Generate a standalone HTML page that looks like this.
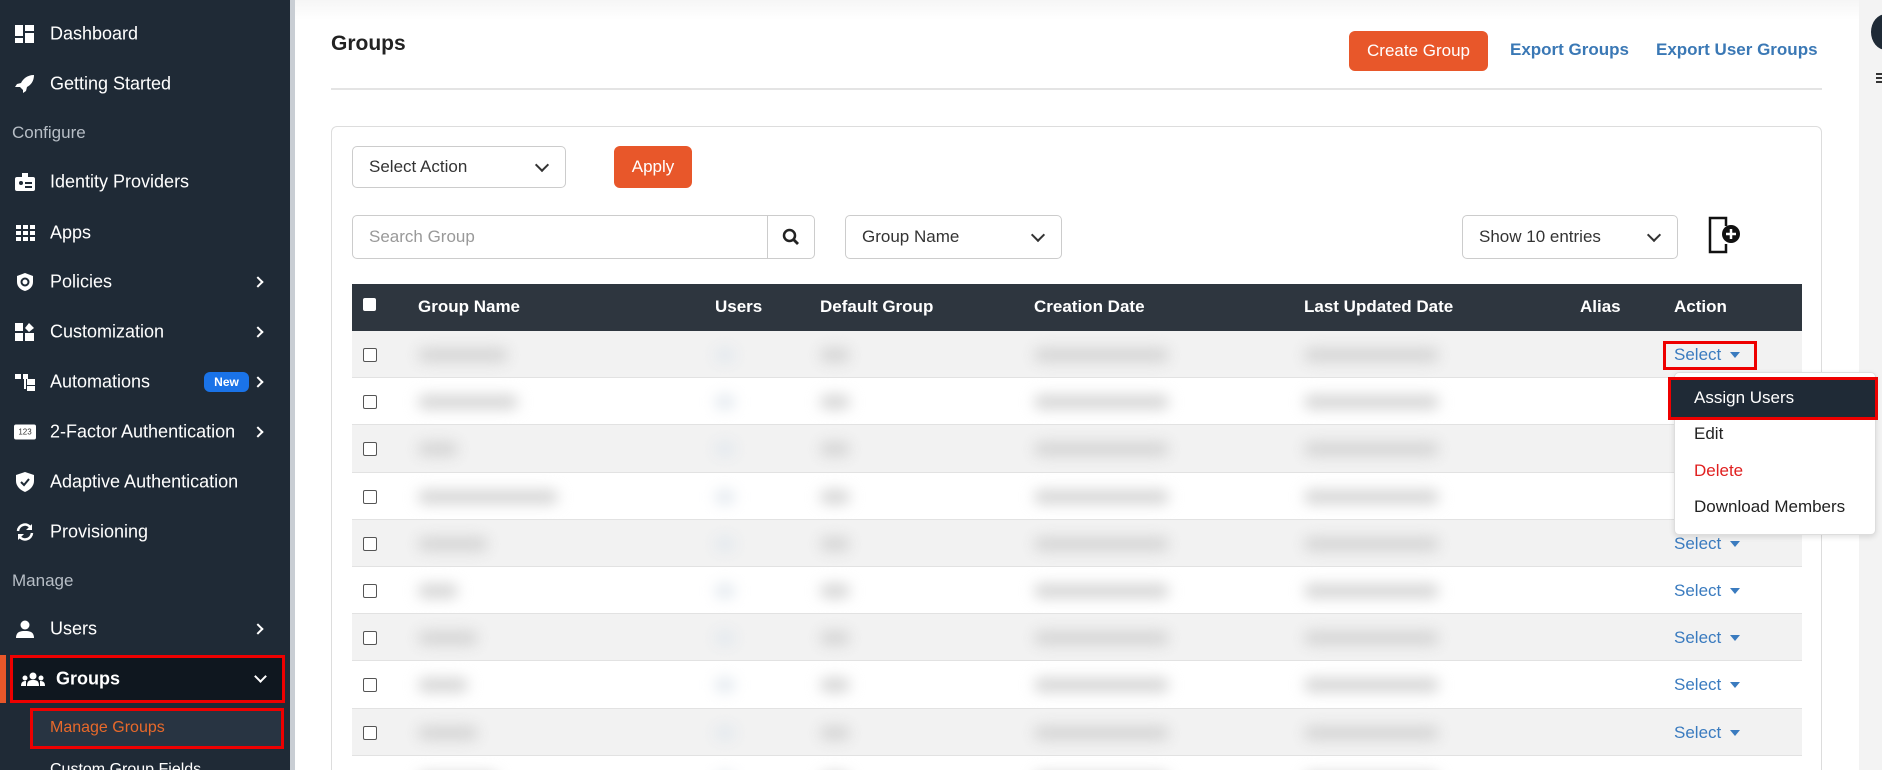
<!DOCTYPE html>
<html style="width:1882px;height:770px;overflow:hidden"><head><meta charset="utf-8"><style>
*{box-sizing:border-box;margin:0;padding:0}
body{width:1882px;height:770px;overflow:hidden;background:#fff;font-family:"Liberation Sans",sans-serif;position:relative}
.sb{position:absolute;left:0;top:0;width:290px;height:770px;background:#1f2a36}
.sbar{position:absolute;left:290px;top:0;width:5px;height:770px;background:#c9ced4}
.it{position:absolute;left:50px;color:#fff;font-size:18px;transform:translateY(-50%)}
.ic{position:absolute;left:14px;width:22px;height:20px;transform:translateY(-50%)}
.sec{position:absolute;left:12px;color:#b7bec6;font-size:17px;transform:translateY(-50%)}
.chev{position:absolute;left:254px;width:8px;height:8px;border-right:2.5px solid #fff;border-top:2.5px solid #fff;transform:translateY(-50%) rotate(45deg)}
.abs{position:absolute}
.sel{position:absolute;border:1px solid #ccc;border-radius:5px;background:#fff;font-size:17px;color:#333;padding-left:16px;display:flex;align-items:center}
.sel .v{position:absolute;right:18px;top:50%;width:10px;height:10px;border-right:2px solid #333;border-bottom:2px solid #333;transform:translateY(-70%) rotate(45deg)}
.th{position:absolute;top:307px;color:#fff;font-weight:bold;font-size:17px;transform:translateY(-50%)}
.cb{position:absolute;left:363px;width:14px;height:14px;border:1.5px solid #555;border-radius:2px;background:#fff}
.bl{position:absolute;height:14px;background:#d4d4d4;filter:blur(7px);border-radius:7px}
.sl{position:absolute;left:1674px;color:#3a7bbf;font-size:17px;transform:translateY(-50%)}
.sl:after{content:"";display:inline-block;margin-left:9px;border:5px solid transparent;border-top:6px solid #3a7bbf;vertical-align:middle;margin-top:4px}
</style></head><body>
<div class="sb"></div><div class="sbar"></div>
<svg class="ic" style="top:34px" viewBox="0 0 22 20"><rect x="1" y="1" width="8" height="11" fill="#fff"/><rect x="11" y="1" width="9" height="6" fill="#fff"/><rect x="1" y="14" width="8" height="5" fill="#fff"/><rect x="11" y="9" width="9" height="10" fill="#fff"/></svg>
<div class="it" style="top:34px">Dashboard</div>
<svg class="ic" style="top:84px" viewBox="0 0 22 20"><path d="M20 1C13 1 9 5 7 9L3 10 1 13 6 13 9 16 9 19 12 17 13 13C17 11 20 7 20 1Z" fill="#fff"/></svg>
<div class="it" style="top:84px">Getting Started</div>
<div class="sec" style="top:133px">Configure</div>
<svg class="ic" style="top:182px" viewBox="0 0 22 20"><rect x="1" y="5" width="20" height="14" rx="2" fill="#fff"/><rect x="8" y="1" width="6" height="6" fill="#fff"/><circle cx="7" cy="11" r="2" fill="#1f2a36"/><rect x="11" y="10" width="7" height="2" fill="#1f2a36"/><rect x="11" y="14" width="7" height="2" fill="#1f2a36"/></svg>
<div class="it" style="top:182px">Identity Providers</div>
<svg class="ic" style="top:233px" viewBox="0 0 22 20"><g fill="#fff"><rect x="2" y="2" width="5" height="4"/><rect x="9" y="2" width="5" height="4"/><rect x="16" y="2" width="5" height="4"/><rect x="2" y="8" width="5" height="4"/><rect x="9" y="8" width="5" height="4"/><rect x="16" y="8" width="5" height="4"/><rect x="2" y="14" width="5" height="4"/><rect x="9" y="14" width="5" height="4"/><rect x="16" y="14" width="5" height="4"/></g></svg>
<div class="it" style="top:233px">Apps</div>
<svg class="ic" style="top:282px" viewBox="0 0 22 20"><path d="M11 1L19 4V10C19 15 15 18 11 19 7 18 3 15 3 10V4Z" fill="#fff"/><circle cx="11" cy="10" r="3.5" fill="none" stroke="#1f2a36" stroke-width="2"/></svg>
<div class="it" style="top:282px">Policies</div><div class="chev" style="top:282px"></div>
<svg class="ic" style="top:332px" viewBox="0 0 22 20"><g fill="#fff"><rect x="1" y="1" width="8" height="8"/><rect x="1" y="11" width="8" height="8"/><rect x="11" y="11" width="9" height="8"/><path d="M15 1L20 6 15 10 11 6Z"/></g></svg>
<div class="it" style="top:332px">Customization</div><div class="chev" style="top:332px"></div>
<svg class="ic" style="top:382px" viewBox="0 0 22 20"><g fill="#fff"><rect x="1" y="2" width="6" height="5"/><rect x="9" y="2" width="5" height="5"/><rect x="13" y="7" width="8" height="6"/><rect x="13" y="14" width="8" height="5"/><rect x="10" y="6" width="2" height="11"/></g></svg>
<div class="it" style="top:382px">Automations</div>
<div class="abs" style="left:204px;top:372px;width:45px;height:20px;border-radius:6px;background:#1a73e8;color:#fff;font-size:12px;font-weight:bold;text-align:center;line-height:20px">New</div>
<div class="chev" style="top:382px"></div>
<div class="ic" style="top:432px;background:#fff;border-radius:2px;height:15px;width:22px;font-size:8px;color:#333;text-align:center;line-height:15px">123</div>
<div class="it" style="top:432px">2-Factor Authentication</div><div class="chev" style="top:432px"></div>
<svg class="ic" style="top:482px" viewBox="0 0 22 20"><path d="M11 0L20 3V9C20 14 16 18 11 20 6 18 2 14 2 9V3Z" fill="#fff"/><path d="M7 10L10 13 15 7" fill="none" stroke="#1f2a36" stroke-width="2"/></svg>
<div class="it" style="top:482px">Adaptive Authentication</div>
<svg class="ic" style="top:532px" viewBox="0 0 22 20"><path d="M4 9A7 7 0 0 1 17 6M18 11A7 7 0 0 1 5 14" fill="none" stroke="#fff" stroke-width="2.5"/><path d="M18 2V8H12Z M4 18V12H10Z" fill="#fff"/></svg>
<div class="it" style="top:532px">Provisioning</div>
<div class="sec" style="top:581px">Manage</div>
<svg class="ic" style="top:629px" viewBox="0 0 22 20"><circle cx="11" cy="6" r="4.5" fill="#fff"/><path d="M2 19C2 13 6 12 11 12S20 13 20 19Z" fill="#fff"/></svg>
<div class="it" style="top:629px">Users</div><div class="chev" style="top:629px"></div>
<div class="abs" style="left:0;top:655px;width:6px;height:48px;background:#e8572a"></div>
<div class="abs" style="left:10px;top:655px;width:275px;height:48px;background:#0f171f;border:3px solid #e00"></div>
<svg class="ic" style="top:679px;left:20px;width:26px" viewBox="0 0 26 20"><g fill="#fff"><circle cx="13" cy="7" r="3.5"/><path d="M7 17C7 12 9 11 13 11S19 12 19 17Z"/><circle cx="5" cy="9" r="2.5"/><path d="M1 17C1 13 3 12 6 12L6 17Z"/><circle cx="21" cy="9" r="2.5"/><path d="M25 17C25 13 23 12 20 12L20 17Z"/></g></svg>
<div class="it" style="top:679px;left:56px;font-weight:bold">Groups</div>
<div class="abs" style="left:256px;top:672px;width:9px;height:9px;border-right:2.5px solid #fff;border-bottom:2.5px solid #fff;transform:rotate(45deg)"></div>
<div class="abs" style="left:30px;top:708px;width:254px;height:41px;background:#283442;border:3px solid #e00"></div>
<div class="it" style="top:728px;color:#e8692a;font-size:16px">Manage Groups</div>
<div class="it" style="top:770px;color:#fff;font-size:16px">Custom Group Fields</div>
<div class="abs" style="left:295px;top:0;width:1564px;height:20px;background:linear-gradient(#f6f6f6,#fff)"></div>
<div class="abs" style="left:331px;top:44px;transform:translateY(-50%);font-size:21px;font-weight:bold;color:#222">Groups</div>
<div class="abs" style="left:1349px;top:31px;width:139px;height:40px;background:#e8572a;border-radius:6px;color:#fff;font-size:17px;text-align:center;line-height:40px">Create Group</div>
<div class="abs" style="left:1510px;top:50px;transform:translateY(-50%);color:#3a78b5;font-weight:bold;font-size:17px">Export Groups</div>
<div class="abs" style="left:1656px;top:50px;transform:translateY(-50%);color:#3a78b5;font-weight:bold;font-size:17px">Export User Groups</div>
<div class="abs" style="left:331px;top:88px;width:1491px;height:2px;background:#e4e4e4"></div>
<div class="abs" style="left:331px;top:126px;width:1491px;height:660px;border:1px solid #ddd;border-radius:6px"></div>
<div class="sel" style="left:352px;top:146px;width:214px;height:42px">Select Action<span class="v"></span></div>
<div class="abs" style="left:614px;top:146px;width:78px;height:42px;background:#e8572a;border-radius:6px;color:#fff;font-size:17px;text-align:center;line-height:42px">Apply</div>
<div class="sel" style="left:352px;top:215px;width:463px;height:44px;color:#999">Search Group</div>
<div class="abs" style="left:767px;top:215px;width:1px;height:44px;background:#ccc"></div>
<svg class="abs" style="left:782px;top:228px" width="18" height="18" viewBox="0 0 18 18"><circle cx="7.5" cy="7.5" r="5.5" fill="none" stroke="#222" stroke-width="2.5"/><path d="M11.5 11.5L16 16" stroke="#222" stroke-width="2.8"/></svg>
<div class="sel" style="left:845px;top:215px;width:217px;height:44px">Group Name<span class="v"></span></div>
<div class="sel" style="left:1462px;top:215px;width:216px;height:44px">Show 10 entries<span class="v"></span></div>
<svg class="abs" style="left:1708px;top:216px" width="36" height="38" viewBox="0 0 36 38"><path d="M12 2H2V36H12" fill="none" stroke="#111" stroke-width="2.5"/><path d="M12 2H18V10M18 28V36H12" fill="none" stroke="#111" stroke-width="2.5"/><circle cx="23" cy="18" r="9" fill="#111"/><path d="M23 13V23M18 18H28" stroke="#fff" stroke-width="2.5"/></svg>
<div class="abs" style="left:352px;top:284px;width:1450px;height:47px;background:#2e363f"></div>
<div class="abs" style="left:363px;top:298px;width:13px;height:13px;background:#fff;border-radius:2px"></div>
<div class="th" style="left:418px">Group Name</div><div class="th" style="left:715px">Users</div><div class="th" style="left:820px">Default Group</div><div class="th" style="left:1034px">Creation Date</div><div class="th" style="left:1304px">Last Updated Date</div><div class="th" style="left:1580px">Alias</div><div class="th" style="left:1674px">Action</div>
<div id="rows"></div>
<script>
var h='';for(var i=0;i<10;i++){var t=331+i*47.2;h+='<div class="abs" style="left:352px;top:'+t+'px;width:1450px;height:47.2px;background:'+(i%2==0?'#f2f2f2':'#fff')+';border-bottom:1px solid #e2e2e2"></div>';
h+='<div class="cb" style="top:'+(t+17)+'px"></div>';
var w=[90,100,40,140,70,40,60,50,60,80][i];
h+='<div class="bl" style="left:418px;top:'+(t+17)+'px;width:'+w+'px"></div><div class="bl" style="left:715px;top:'+(t+17)+'px;width:20px;background:#e2e8ee"></div><div class="bl" style="left:820px;top:'+(t+17)+'px;width:30px"></div><div class="bl" style="left:1034px;top:'+(t+17)+'px;width:135px"></div><div class="bl" style="left:1304px;top:'+(t+17)+'px;width:135px"></div>';
if(i==0||i>=4)h+='<div class="sl" style="top:'+(t+24)+'px">Select</div>';}
document.getElementById('rows').innerHTML=h;
</script>
<div class="abs" style="left:1859px;top:0;width:23px;height:770px;background:#f3f3f3"></div>
<div class="abs" style="left:1871px;top:14px;width:30px;height:36px;border-radius:50%;background:#1f2a36"></div>
<div class="abs" style="left:1876px;top:73px;width:8px;height:10px;border-top:2px solid #333;border-bottom:2px solid #333"></div>
<div class="abs" style="left:1876px;top:77px;width:8px;height:2px;background:#333"></div>
<div class="abs" style="left:1663px;top:341px;width:94px;height:29px;border:3px solid #e00"></div>
<div class="abs" style="left:1674px;top:372px;width:202px;height:163px;background:#fff;border:1px solid #ddd;border-radius:5px;box-shadow:0 2px 6px rgba(0,0,0,.12)"></div>
<div class="abs" style="left:1668px;top:377px;width:210px;height:43px;background:#1f2a36;border:3px solid #e00"></div>
<div class="abs" style="left:1694px;top:398px;transform:translateY(-50%);color:#fff;font-size:17px">Assign Users</div>
<div class="abs" style="left:1694px;top:434px;transform:translateY(-50%);color:#222;font-size:17px">Edit</div>
<div class="abs" style="left:1694px;top:471px;transform:translateY(-50%);color:#e02020;font-size:17px">Delete</div>
<div class="abs" style="left:1694px;top:507px;transform:translateY(-50%);color:#222;font-size:17px">Download Members</div>
</body></html>
